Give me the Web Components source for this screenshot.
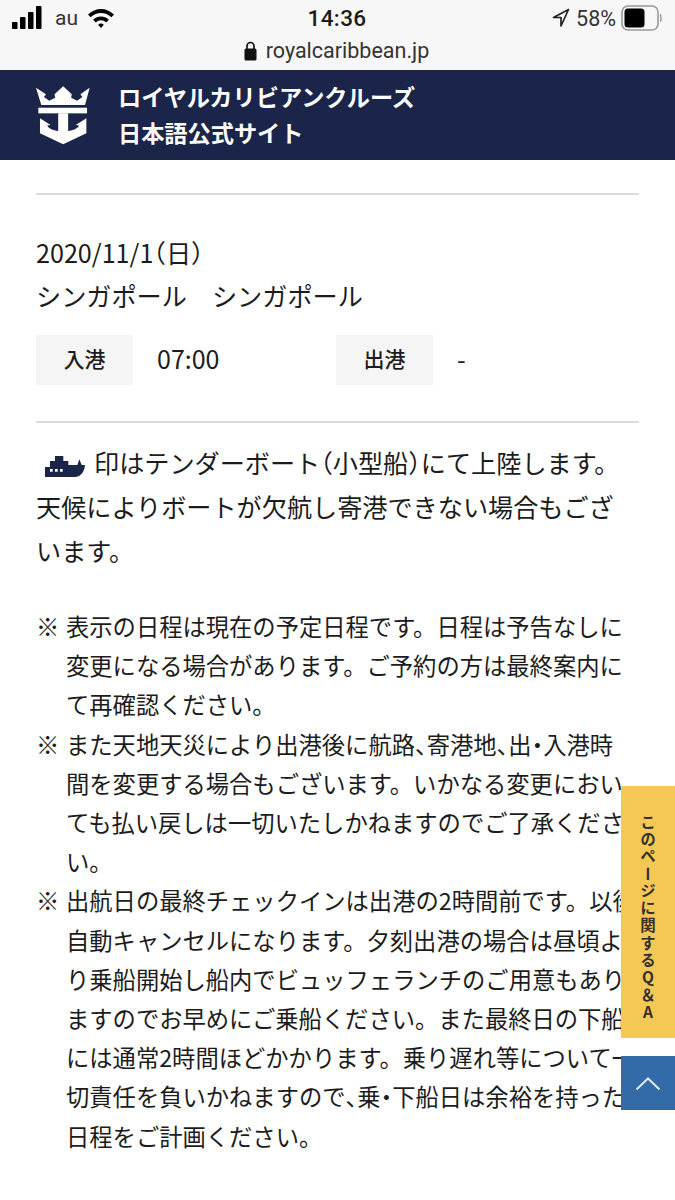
<!DOCTYPE html>
<html lang="ja"><head><meta charset="utf-8"><title>Royal Caribbean</title>
<style>
html,body{margin:0;padding:0;height:1200px;overflow:hidden;background:#fff;color:#1c1c1c;font-family:"Noto Sans CJK JP","Noto Sans",sans-serif}
.h{font-feature-settings:"halt"}
</style></head><body>
<status-bar></status-bar>
<site-header></site-header>
<page-main>
  <port-day date="2020/11/1" dow="日" place="シンガポール　シンガポール" arrive="07:00" depart="-"></port-day>
  <tender-note></tender-note>
  <note-list>
    <note-item>表示の日程は現在の予定日程です。日程は予告なしに<br>変更になる場合があります。ご予約の方は最終案内に<br>て再確認ください。</note-item>
    <note-item>また天地天災により出港後に航路<span class="h">、</span>寄港地<span class="h">、</span>出<span class="h">・</span>入港時<br>間を変更する場合もございます。いかなる変更におい<br>ても払い戻しは一切いたしかねますのでご了承くださ<br>い。</note-item>
    <note-item>出航日の最終チェックインは出港の2時間前です。以後<br>自動キャンセルになります。夕刻出港の場合は昼頃よ<br>り乗船開始し船内でビュッフェランチのご用意もあり<br>ますのでお早めにご乗船ください。また最終日の下船<br>には通常2時間ほどかかります。乗り遅れ等について一<br>切責任を負いかねますので<span class="h">、</span>乗<span class="h">・</span>下船日は余裕を持った<br>日程をご計画ください。</note-item>
  </note-list>
</page-main>
<side-tabs></side-tabs>
<script>
function def(name, html){
  customElements.define(name, class extends HTMLElement{
    constructor(){super();this.attachShadow({mode:"open"}).innerHTML=typeof html==="function"?html(this):html;}
    connectedCallback(){ if(typeof html==="function") this.shadowRoot.innerHTML=html(this); }
  });
}
def("status-bar",`<style>
:host{display:grid;grid-template-columns:1fr auto 1fr;grid-template-rows:36px 34px;height:70px;background:#f7f7f7;color:#111;font-family:Roboto,"Liberation Sans",sans-serif;padding:0 13px 0 12px;box-sizing:border-box;align-items:center}
.l,.r{display:flex;align-items:center}
.r{justify-content:flex-end}
.t{font-size:22.5px;font-weight:500;letter-spacing:.4px;color:#1a1a1a}
.u{grid-column:1/4;justify-self:center;display:flex;align-items:center;gap:9px;font-size:21.500px;color:#333;margin-top:-6px;margin-left:-1px}
.au{font-size:21px;margin:0 9px 0 13px;color:#333}
.p{font-size:21.500px;margin:0 5px 0 6px;color:#333}
svg{display:block}
</style>
<div class="l">
<svg width="30" height="24" viewBox="0 0 30 24"><rect x="0" y="16" width="5.500" height="7" rx="1"/><rect x="8" y="11" width="5.500" height="12" rx="1"/><rect x="16" y="6" width="5.500" height="17" rx="1"/><rect x="24" y="0" width="5.500" height="23" rx="1"/></svg>
<span class="au">au</span>
<svg width="28" height="24" viewBox="0 0 28 24"><path d="M1 8.500C8.500 1 19.500 1 27 8.500L24.400 11.200C18.500 5.500 9.500 5.500 3.600 11.200Z"/><path d="M6.200 13.700C10.800 9.400 17.200 9.400 21.800 13.700L19.200 16.400C16.100 13.500 11.900 13.500 8.800 16.400Z"/><path d="M11.200 18.700C13 17 15 17 16.800 18.700L14 22Z"/></svg>
</div>
<div class="t">14:36</div>
<div class="r">
<svg width="18" height="20" viewBox="0 0 18 20"><path d="M16.500 1.500L1.500 9.500H9V18Z" fill="none" stroke="#222" stroke-width="1.700" stroke-linejoin="round"/></svg>
<span class="p">58%</span>
<svg width="41" height="26" viewBox="0 0 41 26"><rect x="1" y="1" width="36" height="24" rx="6" fill="none" stroke="#999" stroke-width="1.600"/><rect x="3.500" y="3.500" width="20" height="19" rx="3.500" fill="#000"/><path d="M39 9.500c1.500.7 1.500 6.300 0 7" fill="none" stroke="#999" stroke-width="1.500"/></svg>
</div>
<div class="u"><svg width="13" height="21" viewBox="0 0 13 21"><path d="M3 9V6a3.500 3.500 0 0 1 7 0v3" fill="none" stroke="#111" stroke-width="1.700"/><rect x="0.500" y="8.500" width="12" height="12" rx="1.500" fill="#111"/></svg><span>royalcaribbean.jp</span></div>`);
def("site-header",`<style>
:host{display:flex;align-items:center;height:90px;background:#1b2549;color:#fff;padding-left:36px;box-sizing:border-box;gap:28px}
svg{display:block;flex:none;margin-top:0}
.n{font-size:23.200px;font-weight:700;line-height:36px;margin-top:-3px}
</style>
<svg width="54" height="59" viewBox="48 3 163 177" fill="#fff"><path d="M48 8L78 27L72 36L88 47L106 38L104 27L130 3L156 27L154 38L172 47L188 36L182 27L210 8L196 60H64Z"/><rect x="55" y="68" width="147" height="17"/><path d="M115 85H145V138C160 138 175 130 178 122L168 120L200 100V145L130 178L60 145V100L92 120L82 122C85 130 100 138 115 138Z"/></svg>
<div class="n">ロイヤルカリビアンクルーズ<br>日本語公式サイト</div>`);
def("page-main",`<style>:host{display:block;padding:33px 36px 0 36px}</style><slot></slot>`);
def("port-day",h=>`<style>
:host{display:block;border-top:2px solid #dcdcdc;border-bottom:2px solid #dcdcdc;padding:36px 0 36px;font-size:25.150px;line-height:43px}
.paren{font-feature-settings:"halt"}
.row{display:grid;grid-template-columns:97px 203px 97px auto;align-items:center;margin-top:18px;height:50px}
.lb{background:#f5f5f5;height:50px;display:flex;align-items:center;justify-content:center;font-size:21px;font-weight:500;line-height:1;padding-bottom:3px;box-sizing:border-box}
.v{padding-left:24px;font-size:25px;line-height:1;margin-top:-4px}
</style>
<div>${h.getAttribute("date")||""}<span class="paren">（</span>${h.getAttribute("dow")||""}<span class="paren">）</span></div>
<div>${h.getAttribute("place")||""}</div>
<div class="row"><div class="lb">入港</div><div class="v">${h.getAttribute("arrive")||""}</div><div class="lb">出港</div><div class="v">${h.getAttribute("depart")||""}</div></div>`);
def("tender-note",`<style>
:host{display:block;font-size:25.150px;line-height:44px;margin-top:17px;white-space:nowrap}
svg{display:inline-block;vertical-align:-4px;margin:0 9px 0 9px}
.paren{font-feature-settings:"halt"}
</style>
<svg width="40" height="21" viewBox="135 45 120 63" fill="#1b2549"><path fill-rule="evenodd" d="M135 108V78H150V60H165V45H190V60H205V72H232L238 55L245 72H255C253 95 240 108 225 108ZM150 84V92H158V84ZM165 84V92H173V84ZM180 84V92H188V84Z"/></svg>印はテンダーボート<span class="paren">（</span>小型船<span class="paren">）</span>にて上陸します。<br>天候によりボートが欠航し寄港できない場合もござ<br>います。`);
def("note-list",`<style>:host{display:block;margin-top:35px}</style><slot></slot>`);
def("note-item",`<style>
:host{display:grid;grid-template-columns:30px auto;font-size:23.300px;line-height:39.200px;white-space:nowrap}
</style><span>※</span><span><slot></slot></span>`);
def("side-tabs",`<style>
:host{display:block;position:fixed;right:0;top:786px;width:54px}
.q{height:252px;box-sizing:border-box;padding-top:12px;background:#f5c755;color:#33302a;writing-mode:vertical-rl;text-orientation:upright;font-size:15.500px;font-weight:700;letter-spacing:1.800px;display:flex;align-items:center;justify-content:center;line-height:54px;font-family:"Noto Sans CJK JP",sans-serif}
.up{height:54px;margin-top:18px;background:#336aa8;display:flex;align-items:center;justify-content:center}
svg{display:block}
</style><div class="q">このページに関するQ＆A</div><div class="up"><svg width="26" height="15" viewBox="0 0 26 15"><path d="M1.500 13.500L13 2.500L24.500 13.500" fill="none" stroke="#dfe9f4" stroke-width="2"/></svg></div>`);
</script>
</body></html>
